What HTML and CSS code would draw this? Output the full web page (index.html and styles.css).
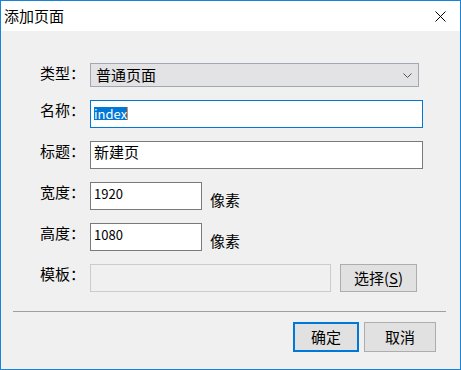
FILE: index.html
```html
<!DOCTYPE html>
<html lang="zh-CN">
<head>
    <meta charset="UTF-8">
    <meta name="viewport" content="width=device-width, initial-scale=1.0">
    <title>添加页面</title>
    <link rel="stylesheet" href="styles.css">
</head>
<body>
    <div class="dialog">
        <div class="titlebar">
            <span class="title">添加页面</span>
            <svg class="close" width="11" height="11" viewBox="0 0 11 11">
                <path d="M0.5 0.5 L10.5 10.5 M10.5 0.5 L0.5 10.5" stroke="#000" stroke-width="1" fill="none"/>
            </svg>
        </div>
        <div class="content">
            <div class="form">
                <div class="row">
                    <span class="label">类型：</span>
                    <div class="select">
                        <span>普通页面</span>
                        <svg class="chevron" width="9" height="5" viewBox="0 0 9 5">
                            <path d="M0.5 0.5 L4.5 4.5 L8.5 0.5" stroke="#555" stroke-width="1" fill="none"/>
                        </svg>
                    </div>
                </div>
                <div class="row">
                    <span class="label">名称：</span>
                    <div class="field field-wide field-focus">
                        <span class="selected">index</span>
                    </div>
                </div>
                <div class="row">
                    <span class="label">标题：</span>
                    <div class="field field-wide field-cjk">新建页</div>
                </div>
                <div class="row">
                    <span class="label">宽度：</span>
                    <div class="field field-small">1920</div>
                    <span class="unit">像素</span>
                </div>
                <div class="row">
                    <span class="label">高度：</span>
                    <div class="field field-small">1080</div>
                    <span class="unit">像素</span>
                </div>
                <div class="row row-template">
                    <span class="label">模板：</span>
                    <div class="field field-template field-disabled"></div>
                    <button class="btn btn-choose">选择(<u>S</u>)</button>
                </div>
            </div>
            <div class="separator"></div>
            <div class="actions">
                <button class="btn btn-primary">确定</button>
                <button class="btn btn-cancel">取消</button>
            </div>
        </div>
    </div>
</body>
</html>
```

FILE: styles.css
```css
body {
    margin: 0;
    padding: 0;
    font-family: "Noto Sans CJK SC", "Noto Sans", sans-serif;
    font-size: 15px;
    color: #000;
    background: #ffffff;
}

.dialog {
    width: 461px;
    height: 370px;
    box-sizing: border-box;
    border: 1px solid #1883d7;
    display: flex;
    flex-direction: column;
}

.titlebar {
    height: 30px;
    background: #ffffff;
    display: flex;
    align-items: center;
    justify-content: space-between;
    padding: 0 14px 0 3px;
}

.title {
    font-size: 15px;
    line-height: 20px;
}

.close {
    display: block;
}

.content {
    flex: 1;
    background: #f0f0f0;
    padding-top: 32px;
}

.form {
    display: flex;
    flex-direction: column;
    gap: 13px;
    padding-left: 39px;
}

.row {
    display: flex;
    align-items: flex-start;
}

.row-template {
    margin-top: 0;
}

.label {
    width: 50px;
    flex: none;
    line-height: 20px;
    margin-top: 0;
}

.select {
    width: 329px;
    height: 24px;
    box-sizing: border-box;
    border: 1px solid #a0a8b2;
    background: #e3e3e5;
    display: flex;
    align-items: center;
    justify-content: space-between;
    padding: 0 6px 0 5px;
    line-height: 20px;
}

.chevron {
    display: block;
}

.field {
    height: 28px;
    box-sizing: border-box;
    border: 1px solid #7a7a7a;
    background: #ffffff;
    padding: 3px 3px 0;
    font-size: 13px;
    line-height: 15px;
}

.field-wide {
    width: 333px;
}

.field-small {
    width: 112px;
}

.field-template {
    width: 241px;
}

.field-cjk {
    font-size: 15px;
    line-height: 18px;
    padding-top: 1px;
}

.field-focus {
    border-color: #0078d7;
    padding-top: 5px;
}

.selected {
    display: inline-block;
    background: #0078d7;
    color: #ffffff;
    line-height: 13px;
    height: 13px;
    border-right: 1px solid #ff8728;
}

.field-disabled {
    border-color: #cccccc;
    background: #f0f0f0;
}

.unit {
    margin: 8px 0 0 8px;
    line-height: 20px;
}

.btn {
    font-family: "Noto Sans CJK SC", "Noto Sans", sans-serif;
    font-size: 15px;
    color: #000;
    background: #e1e1e1;
    border: 1px solid #adadad;
    padding: 0;
    line-height: 20px;
    box-sizing: border-box;
}

.btn-choose {
    width: 77px;
    height: 28px;
    margin-left: 9px;
}

.btn u {
    text-decoration-thickness: 1px;
    text-underline-offset: 2px;
}

.separator {
    height: 1px;
    background: #a0a0a0;
    margin: 19px 14px 0 12px;
}

.actions {
    display: flex;
    justify-content: flex-end;
    gap: 5px;
    margin-top: 10px;
    padding-right: 24px;
}

.btn-primary {
    width: 66px;
    height: 30px;
    border: 2px solid #0078d7;
}

.btn-cancel {
    width: 72px;
    height: 30px;
}
```
